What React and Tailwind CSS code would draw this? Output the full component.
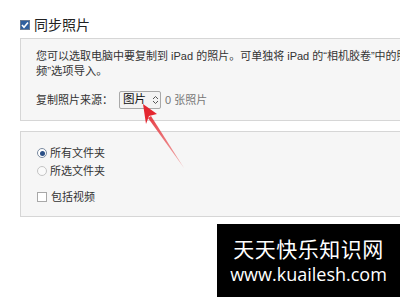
export default function App() {
  return (
    <div className="relative w-[400px] h-[297px] overflow-hidden bg-white text-[#222] font-['Liberation_Sans','Noto_Sans_CJK_SC',sans-serif]">
      {/* Header */}
      <div className="flex items-center gap-[4px] pl-[20px] pt-[13px] h-[37px]">
        <div className="w-[10px] h-[10px] border border-[#6a7a92] bg-[#2f5f9f] flex items-center justify-center">
          <svg width="8" height="8" viewBox="0 0 8 8">
            <path d="M1 4 L3 6.2 L7 1.5" stroke="#fff" strokeWidth="1.6" fill="none" />
          </svg>
        </div>
        <span className="text-[14px] leading-[18px] text-[#222]">同步照片</span>
      </div>

      {/* Panel 1 */}
      <div className="ml-[20px] mt-[1px] w-[420px] h-[83px] border border-[#d6d6d6] bg-[#f6f6f6] pl-[15px] pt-[10px]">
        <p className="text-[11px] leading-[15px] text-[#333] whitespace-nowrap">
          您可以选取电脑中要复制到 iPad 的照片。可单独将 iPad 的“相机胶卷”中的照
        </p>
        <p className="text-[11.3px] leading-[15px] text-[#333] whitespace-nowrap">频”选项导入。</p>
        <div className="flex items-center mt-[12px] text-[11px] text-[#333]">
          <span className="w-[83px]">复制照片来源：</span>
          <div className="flex items-center w-[42px] h-[18px] border border-[#a9a9a9] bg-[#f3f3f3] pl-[3px] rounded-[2px]">
            <span className="text-[11.5px] text-[#111]">图片</span>
            <svg className="ml-[6px]" width="7" height="10" viewBox="0 0 7 10">
              <path d="M1 4 L3.5 1.5 L6 4 M1 6 L3.5 8.5 L6 6" stroke="#555" strokeWidth="1" fill="none" />
            </svg>
          </div>
          <span className="ml-[4px] text-[#777]">0 张照片</span>
        </div>
      </div>

      {/* Panel 2 */}
      <div className="ml-[20px] mt-[10px] w-[420px] h-[86px] border border-[#d6d6d6] bg-[#f6f6f6] pl-[16px] pt-[12px] text-[11px] text-[#333]">
        <div className="flex items-center gap-[3px] h-[18px]">
          <div className="w-[10px] h-[10px] rounded-full border border-[#7a8aa0] bg-white flex items-center justify-center">
            <div className="w-[5px] h-[5px] rounded-full bg-[#2a4f86]" />
          </div>
          <span>所有文件夹</span>
        </div>
        <div className="flex items-center gap-[3px] h-[18px]">
          <div className="w-[10px] h-[10px] rounded-full border border-[#c4c4c4] bg-[#fafafa]" />
          <span>所选文件夹</span>
        </div>
        <div className="flex items-center gap-[4px] h-[18px] mt-[8px]">
          <div className="w-[10px] h-[10px] border border-[#a8a8a8] bg-white" />
          <span>包括视频</span>
        </div>
      </div>

      {/* Red arrow */}
      <svg className="absolute left-0 top-0" width="400" height="297" viewBox="0 0 400 297">
        <defs>
          <linearGradient id="arr" x1="183" y1="168" x2="145" y2="106" gradientUnits="userSpaceOnUse">
            <stop offset="0" stopColor="#e88" stopOpacity="0.7" />
            <stop offset="1" stopColor="#e4262f" />
          </linearGradient>
        </defs>
        <path d="M184 168 L151 116 L148 118 Z" fill="url(#arr)" />
        <path d="M143 104 L157 114 L149 116 L146 124 Z" fill="#e4262f" />
      </svg>

      {/* Watermark */}
      <div className="absolute left-[217px] top-[224px] w-[183px] h-[73px] bg-black flex flex-col items-center pt-[11px] text-white font-['Noto_Sans_CJK_SC',sans-serif]">
        <span className="text-[21px] leading-[26px] tracking-[0.5px]">天天快乐知识网</span>
        <span className="text-[18px] leading-[26px] font-['Open_Sans',sans-serif]">www.kuailesh.com</span>
      </div>
    </div>
  );
}
